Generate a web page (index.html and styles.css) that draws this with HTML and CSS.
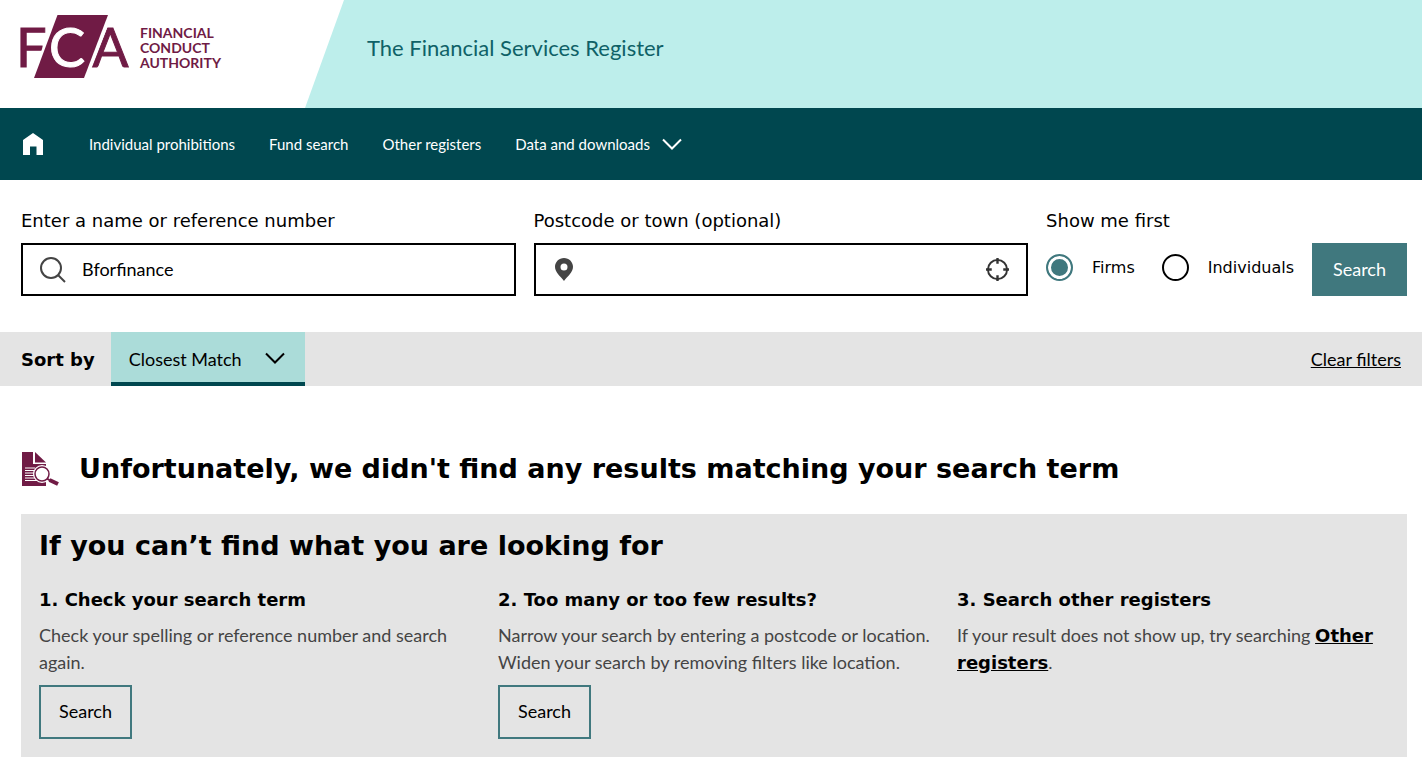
FILE: index.html
```html
<!DOCTYPE html>
<html lang="en">
<head>
  <meta charset="UTF-8">
  <meta name="viewport" content="width=device-width, initial-scale=1.0">
  <title>The Financial Services Register</title>
  <link rel="stylesheet" href="styles.css">
</head>
<body>
  <header class="header">
    <a class="logo" href="#" aria-label="Financial Conduct Authority">
      <svg class="logo-mark" width="120" height="64" viewBox="-10 0 120 64">
        <text class="logo-letter" x="-4" y="52">F</text>
        <text class="logo-letter" x="72" y="52">A</text>
        <path d="M38 1H88L64 63H15Z" fill="#701b45" stroke="#fff" stroke-width="7"/>
        <path d="M37.500 0H88L64 63H14Z" fill="#701b45"/>
        <text class="logo-letter logo-letter-light" x="29" y="52">C</text>
      </svg>
      <span class="logo-name">FINANCIAL<br>CONDUCT<br>AUTHORITY</span>
    </a>
    <div class="banner">The Financial Services Register</div>
  </header>

  <nav class="nav">
    <a class="home" href="#" aria-label="Home">
      <svg width="20" height="22" viewBox="0 0 20 22"><path d="M10 0L20 7V22H13.500V13.500H7V22H0V7Z" fill="#fff"/></svg>
    </a>
    <a href="#">Individual prohibitions</a>
    <a href="#">Fund search</a>
    <a href="#">Other registers</a>
    <button type="button" class="nav-menu">Data and downloads
      <svg width="20" height="12" viewBox="0 0 20 12"><path d="M1 1.500L10 10.500L19 1.500" fill="none" stroke="#fff" stroke-width="2"/></svg>
    </button>
  </nav>

  <main>
    <form class="search" onsubmit="return false">
      <div class="field">
        <label for="name">Enter a name or reference number</label>
        <div class="box">
          <svg width="26" height="26" viewBox="0 0 26 26"><circle cx="11" cy="11" r="10" fill="none" stroke="#444" stroke-width="2"/><path d="M18 18L25 25" stroke="#444" stroke-width="2"/></svg>
          <input type="text" id="name" name="name" value="Bforfinance">
        </div>
      </div>
      <div class="field">
        <label for="place">Postcode or town (optional)</label>
        <div class="box">
          <svg class="pin" width="18" height="23" viewBox="0 0 18 23"><path d="M9 0C4 0 0 4 0 8.800C0 14 5 18 9 23C13 18 18 14 18 8.800C18 4 14 0 9 0ZM9 5.500A3.500 3.500 0 1 1 9 12.500A3.500 3.500 0 1 1 9 5.500Z" fill="#444"/></svg>
          <input type="text" id="place" name="place">
          <button type="button" class="locate" aria-label="Use my location">
            <svg width="23" height="23" viewBox="0 0 24 24"><g fill="none" stroke="#333" stroke-width="2"><circle cx="12" cy="12" r="10"/><path d="M12 0V6M12 18V24M0 12H6M18 12H24" stroke-width="2.500"/></g></svg>
          </button>
        </div>
      </div>
      <fieldset class="field">
        <legend>Show me first</legend>
        <div class="choices">
          <input type="radio" id="firms" name="type" checked>
          <label for="firms">Firms</label>
          <input type="radio" id="individuals" name="type">
          <label for="individuals">Individuals</label>
        </div>
      </fieldset>
      <button type="submit" class="btn btn-main">Search</button>
    </form>

    <div class="sort">
      <label for="sort">Sort by</label>
      <div class="sort-select">
        <select id="sort">
          <option>Closest Match</option>
        </select>
        <svg width="20" height="12" viewBox="0 0 20 12"><path d="M1 1.500L10 10.500L19 1.500" fill="none" stroke="#000" stroke-width="2"/></svg>
      </div>
      <a class="clear" href="#">Clear filters</a>
    </div>

    <section class="results">
      <div class="message">
        <svg width="38" height="34" viewBox="0 0 38 34">
          <path d="M1 0H12V12H25V34H1Z" fill="#701b45"/>
          <path d="M14 0L25 10.500H14Z" fill="#701b45"/>
          <path d="M4 16H14M4 18.500H14M4 21H14M4 23.500H14M4 26H15M4 28.500H17" stroke="#fff" stroke-width="1"/>
          <circle cx="21" cy="22" r="9" fill="#fff"/>
          <circle cx="21" cy="22" r="7" fill="#fff" stroke="#701b45" stroke-width="1.500"/>
          <path d="M26 26.500L29 28.500" stroke="#701b45" stroke-width="2"/>
          <path d="M28.500 28L37 32" stroke="#701b45" stroke-width="4"/>
        </svg>
        <h1>Unfortunately, we didn't find any results matching your search term</h1>
      </div>

      <div class="panel">
        <h2>If you can’t find what you are looking for</h2>
        <div class="tips">
          <div>
            <h3>1. Check your search term</h3>
            <p>Check your spelling or reference number and search again.</p>
            <button type="button" class="btn btn-line">Search</button>
          </div>
          <div>
            <h3>2. Too many or too few results?</h3>
            <p>Narrow your search by entering a postcode or location. Widen your search by removing filters like location.</p>
            <button type="button" class="btn btn-line">Search</button>
          </div>
          <div>
            <h3>3. Search other registers</h3>
            <p>If your result does not show up, try searching <a href="#">Other registers</a>.</p>
          </div>
        </div>
      </div>
    </section>
  </main>
</body>
</html>
```
FILE: styles.css
```css
* {
  box-sizing: border-box;
}

body {
  margin: 0;
  background: #fff;
  color: #000;
  font-family: Lato, sans-serif;
  font-size: 18px;
  line-height: 27px;
}

h1, h2, h3, p {
  margin: 0;
}

button, input, select {
  font: inherit;
  color: inherit;
}

button {
  cursor: pointer;
}

svg {
  display: block;
  flex: none;
}

/* header */
.header {
  display: flex;
  height: 108px;
}

.logo {
  display: flex;
  flex: none;
  width: 305px;
  padding: 15px 0 0 10px;
  color: #701b45;
  text-decoration: none;
}

.logo-letter {
  font-size: 54px;
  fill: #701b45;
  stroke: #701b45;
  stroke-width: 1px;
}

.logo-letter-light {
  fill: #fff;
  stroke: #fff;
}

.logo-name {
  padding: 10px 0 0 10px;
  font-size: 14px;
  font-weight: bold;
  line-height: 15px;
}

.banner {
  flex: 1;
  padding: 34px 0 0 62px;
  background: #bdeeeb;
  clip-path: polygon(39px 0, 100% 0, 100% 100%, 0 100%);
  color: #0f6167;
  font-size: 22px;
}

/* navigation */
.nav {
  display: flex;
  align-items: center;
  gap: 34px;
  height: 72px;
  padding: 0 23px;
  background: #00474f;
  font-size: 15px;
}

.nav a, .nav-menu {
  color: #fff;
  text-decoration: none;
}

.home {
  margin-right: 12px;
}

.nav-menu {
  display: flex;
  align-items: center;
  gap: 12px;
  padding: 0;
  border: 0;
  background: none;
}

/* search form */
.search {
  display: grid;
  grid-template-columns: 1fr 1fr auto auto;
  align-items: end;
  gap: 18px;
  padding: 27px 15px 36px 21px;
}

.field {
  min-width: 0;
  margin: 0;
  padding: 0;
  border: 0;
}

.field > label, legend {
  display: block;
  padding: 0;
  margin-bottom: 9px;
  font-family: Verdana, "DejaVu Sans", sans-serif;
}

.box {
  display: flex;
  align-items: center;
  gap: 16px;
  height: 53px;
  padding: 0 17px;
  border: 2px solid #000;
}

.box input {
  flex: 1;
  min-width: 0;
  padding: 0;
  border: 0;
  outline: 0;
  background: none;
}

.pin {
  margin-left: 2px;
}

.locate {
  padding: 0;
  border: 0;
  background: none;
}

.choices {
  display: flex;
  align-items: center;
  height: 53px;
  padding-bottom: 4px;
  font-family: Verdana, "DejaVu Sans", sans-serif;
  font-size: 16px;
}

.choices input {
  appearance: none;
  width: 27px;
  height: 27px;
  margin: 0 19px 0 0;
  border: 2px solid #000;
  border-radius: 50%;
}

.choices input:checked {
  border-color: #40787e;
  background: #40787e;
  box-shadow: inset 0 0 0 3px #fff;
}

.choices label + input {
  margin-left: 27px;
}

.btn {
  height: 54px;
  padding: 0 18px 2px;
  border: 2px solid #40787e;
  border-radius: 0;
}

.btn-main {
  height: 53px;
  padding: 0 19px;
  background: #40787e;
  color: #fff;
}

.btn-line {
  background: none;
}

/* sort bar */
.sort {
  display: flex;
  align-items: center;
  height: 54px;
  padding: 0 21px;
  background: #e4e4e4;
}

.sort label {
  margin-right: 16px;
  font-family: Verdana, "DejaVu Sans", sans-serif;
  font-weight: bold;
}

.sort-select {
  position: relative;
}

.sort-select select {
  appearance: none;
  width: 194px;
  height: 54px;
  padding: 4px 18px 0;
  border: 0;
  border-bottom: 4px solid #00474f;
  border-radius: 0;
  background: #abdcd9;
}

.sort-select svg {
  position: absolute;
  top: 20px;
  right: 20px;
  pointer-events: none;
}

.clear {
  margin-left: auto;
  color: #000;
}

/* results */
.results {
  padding: 63px 15px 26px 21px;
}

.message {
  display: flex;
  align-items: center;
  gap: 20px;
  margin-bottom: 25px;
}

h1, h2 {
  font-family: Verdana, "DejaVu Sans", sans-serif;
  font-size: 27px;
  line-height: 40px;
}

.panel {
  padding: 12px 18px 18px;
  background: #e4e4e4;
}

.tips {
  display: grid;
  grid-template-columns: repeat(3, 1fr);
  gap: 27px;
  margin-top: 20px;
}

h3 {
  margin-bottom: 9px;
  font-family: Verdana, "DejaVu Sans", sans-serif;
  font-size: 18px;
}

.tips p {
  margin-bottom: 9px;
  color: #444;
}

.tips a {
  color: #000;
  font-family: Verdana, "DejaVu Sans", sans-serif;
  font-weight: bold;
}
```
